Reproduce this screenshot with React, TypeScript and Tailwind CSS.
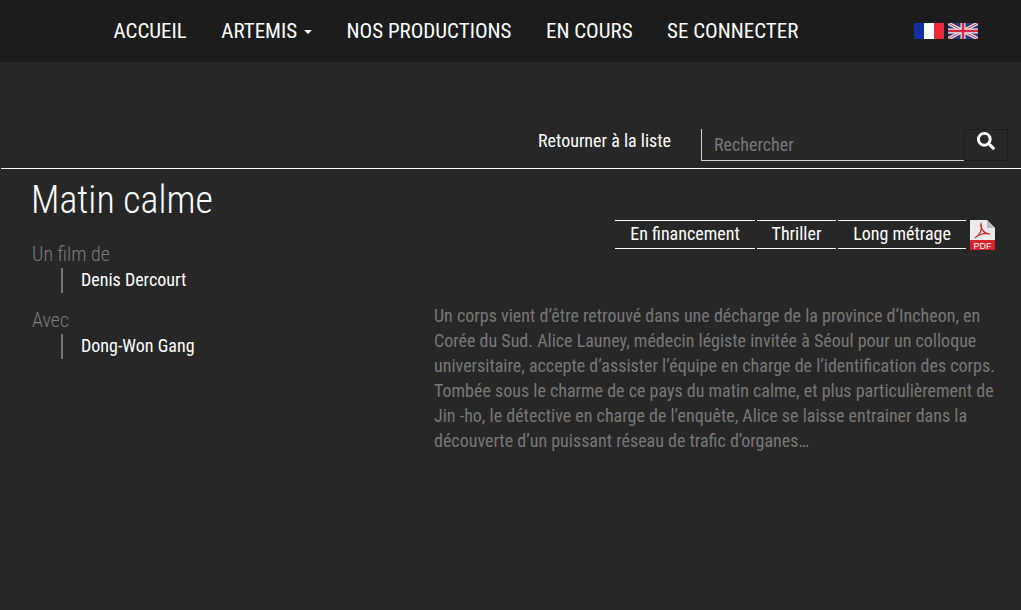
import React from "react";
import { FaSearch } from "react-icons/fa";

const NavItem = ({ children }: { children: React.ReactNode }) => (
  <a className="text-[21px] leading-[24px] text-white whitespace-nowrap">{children}</a>
);

const Tag = ({ children, w }: { children: React.ReactNode; w: string }) => (
  <span className={`${w} h-[29px] flex items-center justify-center border-y border-white text-white text-[18px] leading-[24px] pb-[2px]`}>{children}</span>
);

const Credit = ({ label, name }: { label: string; name: string }) => (
  <div className="mb-[14px]">
    <div className="ml-px text-[#7c7c7c] text-[20px] leading-[26px] font-light">{label}</div>
    <div className="mt-px ml-[30px] border-l-2 border-[#777] h-[25px] pl-[18px] text-white text-[18px] leading-[23px]">{name}</div>
  </div>
);

export default function App() {
  return (
    <div className="w-[1021px] h-[610px] overflow-hidden bg-[#272727] font-['Roboto',sans-serif] font-stretch-condensed">
      <header className="h-[62px] bg-[#1c1c1c] flex items-center pl-[113.5px] pr-[43px]">
        <nav className="flex items-center gap-[34.5px]">
          <NavItem>ACCUEIL</NavItem>
          <NavItem>
            ARTEMIS
            <span className="inline-block ml-[7px] align-middle border-x-[4px] border-t-[4px] border-x-transparent border-t-white" />
          </NavItem>
          <NavItem>NOS PRODUCTIONS</NavItem>
          <NavItem>EN COURS</NavItem>
          <NavItem>SE CONNECTER</NavItem>
        </nav>
        <div className="ml-auto flex items-center gap-[4px]">
          <svg width="30" height="16" viewBox="0 0 30 16">
            <rect width="10" height="16" fill="#12309f" />
            <rect x="10" width="10" height="16" fill="#ffffff" />
            <rect x="20" width="10" height="16" fill="#f0283c" />
          </svg>
          <svg width="30" height="16" viewBox="0 0 30 16">
            <rect width="30" height="16" fill="#29377f" />
            <path d="M0 0L30 16M30 0L0 16" stroke="#e8e0e8" strokeWidth="3.4" />
            <path d="M0 0L30 16M30 0L0 16" stroke="#c8324a" strokeWidth="1" />
            <path d="M15 0V16M0 8H30" stroke="#f0eaf0" strokeWidth="5" />
            <path d="M15 0V16M0 8H30" stroke="#d22a40" strokeWidth="2.6" />
          </svg>
        </div>
      </header>

      <div className="h-[107px] ml-px border-b border-white flex items-end pb-[7px] pl-[537px]">
        <a className="text-white text-[18px] leading-[24px] mb-[8px] whitespace-nowrap w-[163px]">Retourner à la liste</a>
        <div className="flex h-[32px]">
          <div className="w-[263px] border-l border-b border-[#cfcfcf] pl-[12px] pt-px text-[#777] text-[18px] leading-[30px]">Rechercher</div>
          <div className="w-[44px] border border-[#1c1c1c] flex justify-center pt-[2px]">
            <FaSearch size={18} className="text-white" />
          </div>
        </div>
      </div>

      <main className="flex">
        <section className="w-[402px] pl-[31px] pt-[9px] shrink-0">
          <h1 className="text-white text-[38px] leading-[44px] font-light mb-[19px]">Matin calme</h1>
          <Credit label="Un film de" name="Denis Dercourt" />
          <Credit label="Avec" name="Dong-Won Gang" />
        </section>
        <section className="flex-1 pt-[51px] pr-[26px] min-w-0">
          <div className="flex justify-end items-start gap-[2px]">
            <Tag w="w-[140px]">En financement</Tag>
            <Tag w="w-[79px]">Thriller</Tag>
            <Tag w="w-[128px]">Long métrage</Tag>
            <svg width="25" height="30" viewBox="0 0 25 30" className="ml-[2px]">
              <path d="M0 0H17L25 8V20H0Z" fill="#ececec" />
              <path d="M17 0L25 8H17Z" fill="#bdbdbd" />
              <path d="M5 18C9 16 13 10 11 4C10 8 14 14 20 14C14 13 8 15 5 18Z" fill="none" stroke="#d8232a" strokeWidth="1.2" />
              <rect y="20" width="25" height="10" fill="#d8232a" />
              <text x="12.5" y="28.5" textAnchor="middle" fontSize="9" fill="#fff" fontFamily="Liberation Sans">PDF</text>
            </svg>
          </div>
          <p className="mt-[53px] pl-[32px] text-[#777] text-[18px] leading-[25px]">
            Un corps vient d’être retrouvé dans une décharge de la province d’Incheon, en Corée du Sud. Alice Launey, médecin légiste invitée à Séoul pour un colloque universitaire, accepte d’assister l’équipe en charge de l’identification des corps. Tombée sous le charme de ce pays du matin calme, et plus particulièrement de Jin -ho, le détective en charge de l’enquête, Alice se laisse entrainer dans la découverte d’un puissant réseau de trafic d’organes…
          </p>
        </section>
      </main>
    </div>
  );
}
